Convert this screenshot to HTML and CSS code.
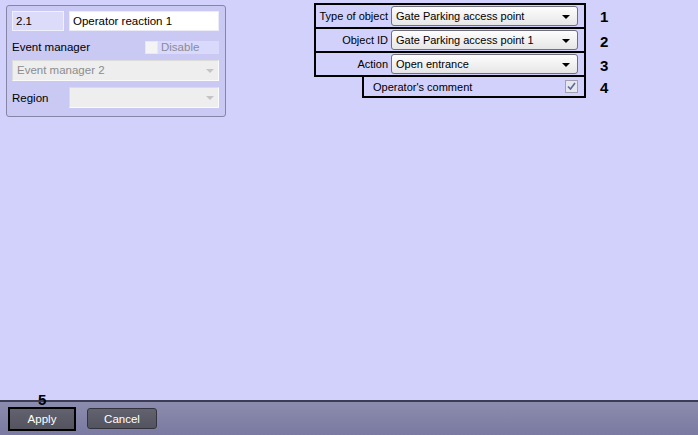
FILE: index.html
```html
<!DOCTYPE html>
<html lang="en">
<head>
  <meta charset="UTF-8">
  <title>Operator reaction</title>
  <link rel="stylesheet" href="styles.css">
</head>
<body>
  <div class="main">
    <div class="panel">
      <div class="row">
        <div class="edit edit-id">2.1</div>
        <div class="edit edit-name">Operator reaction 1</div>
      </div>
      <div class="row row-em">
        <span class="label">Event manager</span>
        <span class="disable"><span class="box"></span>Disable</span>
      </div>
      <div class="combo combo-off">Event manager 2<span class="arrow-off"></span></div>
      <div class="row">
        <span class="label label-region">Region</span>
        <div class="combo combo-off combo-region"><span class="arrow-off"></span></div>
      </div>
    </div>

    <div class="form">
      <div class="field">
        <span class="flabel">Type of object</span>
        <div class="select">Gate Parking access point<span class="arrow"></span></div>
      </div>
      <div class="num">1</div>
      <div class="field">
        <span class="flabel">Object ID</span>
        <div class="select">Gate Parking access point 1<span class="arrow"></span></div>
      </div>
      <div class="num">2</div>
      <div class="field">
        <span class="flabel">Action</span>
        <div class="select">Open entrance<span class="arrow"></span></div>
      </div>
      <div class="num">3</div>
      <div class="field field-comment">
        <span class="clabel">Operator's comment</span>
        <span class="check">
          <svg width="11" height="11" viewBox="0 0 11 11"><path d="M2 5.5 L4.5 8 L9 2" fill="none" stroke="#5a6a9a" stroke-width="1.6"/></svg>
        </span>
      </div>
      <div class="num num-4">4</div>
    </div>
  </div>

  <div class="footer">
    <span class="num5">5</span>
    <button class="btn btn-apply">Apply</button>
    <button class="btn">Cancel</button>
  </div>
</body>
</html>
```

FILE: styles.css
```css
/* Basic styling */
body {
  margin: 0;
  width: 698px;
  height: 435px;
  display: flex;
  flex-direction: column;
  background-color: #d1d1fb;
  font-family: "Liberation Sans", Arial, sans-serif;
  font-size: 11.5px;
  color: #000;
  overflow: hidden;
}
.main {
  flex: 1;
  display: flex;
  align-items: flex-start;
}

/* left panel */
.panel {
  width: 207px;
  margin: 5px 0 0 6px;
  padding: 5px 6px 8px 5px;
  border: 1px solid #8585a5;
  border-radius: 3px;
  background-color: #c9c9f3;
  display: flex;
  flex-direction: column;
  gap: 6px;
}
.row {
  display: flex;
  align-items: center;
  gap: 5px;
}
.edit {
  height: 18px;
  line-height: 18px;
  padding: 0 3px;
  border: 1px solid #fff;
  box-sizing: content-box;
}
.edit-id {
  width: 44px;
  background-color: #dcdcfa;
  border-color: #f0f0ff;
}
.edit-name {
  flex: 1;
  background-color: #fff;
  border-color: #ececf8;
}
.row-em {
  justify-content: space-between;
  height: 14px;
  margin-top: 3px;
}
.label {
  color: #000;
}
.label-region {
  width: 52px;
}
.disable {
  width: 74px;
  height: 13px;
  display: flex;
  align-items: center;
  gap: 3px;
  color: #8a8a9a;
  background-color: #d9d9fb;
}
.disable .box {
  width: 11px;
  height: 11px;
  border: 1px solid #e8e8ee;
  background-color: #f4f4f4;
}
.combo {
  position: relative;
  height: 19px;
  line-height: 19px;
  padding: 0 4px;
  border: 1px solid #fafafa;
}
.combo-off {
  background-color: #eeeeee;
  border-color: #dcdcdc #fafafa #fafafa #dcdcdc;
  color: #8c8c8c;
}
.combo-region {
  flex: 1;
}
.arrow-off {
  position: absolute;
  right: 4px;
  top: 8px;
  border-left: 4px solid transparent;
  border-right: 4px solid transparent;
  border-top: 4px solid #c4c4c4;
}

/* right form */
.form {
  margin: 3px 0 0 88px;
  display: grid;
  grid-template-columns: 272px 34px;
  font-size: 11px;
}
.field {
  height: 22px;
  margin-top: -2px;
  border: 2px solid #000;
  display: flex;
  align-items: center;
  justify-content: flex-end;
  gap: 3px;
  padding-right: 6px;
}
.field:first-child {
  margin-top: 0;
}
.flabel {
  white-space: nowrap;
}
.select {
  position: relative;
  width: 181px;
  height: 18px;
  line-height: 18px;
  padding-left: 4px;
  border: 1px solid #6f6f7f;
  border-radius: 3px;
  background: linear-gradient(#fdfdfd, #e6e6e6);
}
.arrow {
  position: absolute;
  right: 7px;
  top: 8px;
  border-left: 4px solid transparent;
  border-right: 4px solid transparent;
  border-top: 4px solid #000;
}
.field-comment {
  margin-left: 48px;
  height: 19px;
  justify-content: space-between;
  padding-left: 9px;
  padding-right: 6px;
}
.check {
  width: 11px;
  height: 11px;
  border: 1px solid #a0a0b0;
  background-color: #e6e6ee;
  display: flex;
}
.num {
  font-size: 15px;
  font-weight: bold;
  padding-left: 14px;
  display: flex;
  align-items: center;
}

/* bottom bar */
.footer {
  position: relative;
  height: 33px;
  border-top: 2px solid #3c3c54;
  background: linear-gradient(#8c8cae, #7a7aa2);
  display: flex;
  align-items: center;
  gap: 11px;
  padding-left: 8px;
}
.num5 {
  position: absolute;
  left: 38px;
  top: -11px;
  font-size: 15px;
  font-weight: bold;
}
.btn {
  width: 70px;
  height: 21px;
  border: 1px solid #33333d;
  border-radius: 3px;
  background: linear-gradient(#626270, #54545f);
  color: #fff;
  font-family: "Liberation Sans", Arial, sans-serif;
  font-size: 11.5px;
  padding: 0;
}
.btn-apply {
  width: 68px;
  height: 24px;
  border: 2px solid #000;
  border-radius: 0;
}
```
